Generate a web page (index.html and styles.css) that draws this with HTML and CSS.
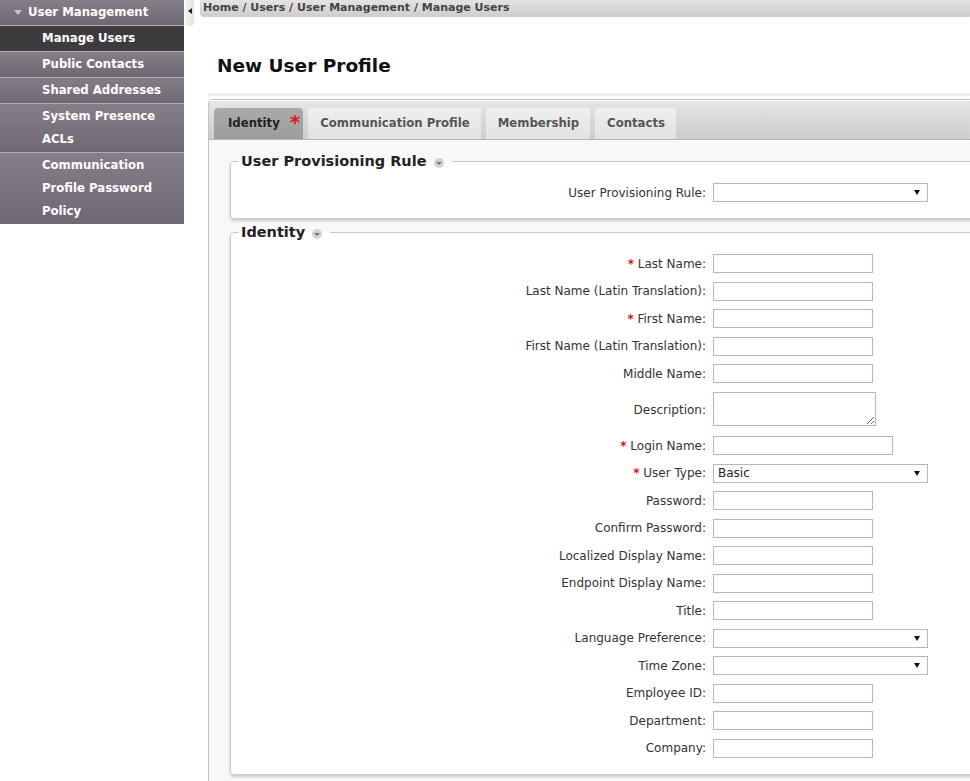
FILE: index.html
```html
<!DOCTYPE html>
<html lang="en">
<head>
<meta charset="utf-8">
<title>New User Profile</title>
<link rel="stylesheet" href="styles.css">
</head>
<body>
<div class="page">
  <nav class="sidebar">
    <div class="nav-head"><span class="caret-down"></span>User Management</div>
    <div class="nav-item active">Manage Users</div>
    <div class="nav-item">Public Contacts</div>
    <div class="nav-item">Shared Addresses</div>
    <div class="nav-item">System Presence<br>ACLs</div>
    <div class="nav-item">Communication<br>Profile Password<br>Policy</div>
  </nav>
  <div class="handle-col"><div class="handle"><span class="caret-left"></span></div></div>
  <main class="main">
    <div class="breadcrumb">Home / Users / User Management / Manage Users</div>
    <h1 class="title">New User Profile</h1>
    <div class="rule"></div>
    <div class="panel">
      <div class="tabbar">
        <div class="tab active">Identity<span class="tab-star">*</span></div>
        <div class="tab">Communication Profile</div>
        <div class="tab">Membership</div>
        <div class="tab">Contacts</div>
      </div>
      <div class="panel-body">
        <fieldset class="box box-rule">
          <legend>User Provisioning Rule<span class="sec-icon"><span></span></span></legend>
          <div class="form">
            <label class="lbl">User Provisioning Rule:</label>
            <div class="select"><span></span><span class="arrow"></span></div>
          </div>
        </fieldset>
        <fieldset class="box box-identity">
          <legend>Identity<span class="sec-icon"><span></span></span></legend>
          <div class="form">
            <label class="lbl"><span class="req">*</span> Last Name:</label>
            <input class="txt" type="text">
            <label class="lbl">Last Name (Latin Translation):</label>
            <input class="txt" type="text">
            <label class="lbl"><span class="req">*</span> First Name:</label>
            <input class="txt" type="text">
            <label class="lbl">First Name (Latin Translation):</label>
            <input class="txt" type="text">
            <label class="lbl">Middle Name:</label>
            <input class="txt" type="text">
            <label class="lbl">Description:</label>
            <textarea class="area"></textarea>
            <label class="lbl"><span class="req">*</span> Login Name:</label>
            <input class="txt wide" type="text">
            <label class="lbl"><span class="req">*</span> User Type:</label>
            <div class="select"><span>Basic</span><span class="arrow"></span></div>
            <label class="lbl">Password:</label>
            <input class="txt" type="text">
            <label class="lbl">Confirm Password:</label>
            <input class="txt" type="text">
            <label class="lbl">Localized Display Name:</label>
            <input class="txt" type="text">
            <label class="lbl">Endpoint Display Name:</label>
            <input class="txt" type="text">
            <label class="lbl">Title:</label>
            <input class="txt" type="text">
            <label class="lbl">Language Preference:</label>
            <div class="select"><span></span><span class="arrow"></span></div>
            <label class="lbl">Time Zone:</label>
            <div class="select"><span></span><span class="arrow"></span></div>
            <label class="lbl">Employee ID:</label>
            <input class="txt" type="text">
            <label class="lbl">Department:</label>
            <input class="txt" type="text">
            <label class="lbl">Company:</label>
            <input class="txt" type="text">
          </div>
        </fieldset>
      </div>
    </div>
  </main>
</div>
</body>
</html>
```
FILE: styles.css
```css
html, body {
  margin: 0;
  padding: 0;
  background: #fff;
  overflow: hidden;
}
body {
  font-family: "DejaVu Sans", Verdana, sans-serif;
  font-size: 12px;
  color: #333;
}
.page {
  display: flex;
  align-items: flex-start;
  width: 970px;
  height: 781px;
}

/* sidebar */
.sidebar {
  width: 184px;
  flex-shrink: 0;
  display: flex;
  flex-direction: column;
  background: #b2acb4;
  gap: 1px;
}
.nav-head, .nav-item {
  font-weight: bold;
  font-size: 11.7px;
  color: #fff;
  background: linear-gradient(#857d88, #6f6873);
  line-height: 23px;
}
.nav-head {
  height: 25px;
  line-height: 25px;
  padding-left: 28px;
  position: relative;
  display: flex;
  align-items: center;
}
.caret-down {
  position: absolute;
  left: 14px;
  top: 10px;
  width: 0;
  height: 0;
  border-left: 4px solid transparent;
  border-right: 4px solid transparent;
  border-top: 5px solid #c9c5cb;
}
.nav-item {
  padding: 1px 0 1px 42px;
}
.nav-item.active {
  background: #3e3b3f;
}

.handle-col {
  width: 16px;
  flex-shrink: 0;
}
.handle {
  margin-left: 1px;
  width: 9px;
  height: 26px;
  background: linear-gradient(90deg, #f2f2f2, #e2e2e2);
  border-radius: 0 0 4px 0;
  display: flex;
  align-items: flex-start;
  justify-content: center;
  padding-top: 8px;
  box-sizing: border-box;
}
.caret-left {
  width: 0;
  height: 0;
  border-top: 3px solid transparent;
  border-bottom: 3px solid transparent;
  border-right: 4px solid #222;
}

/* main */
.main {
  flex: 1;
  min-width: 0;
  overflow: hidden;
}
.breadcrumb {
  height: 17px;
  line-height: 16px;
  padding-left: 3px;
  font-weight: bold;
  font-size: 11px;
  color: #444;
  background: linear-gradient(#e3e3e3, #cdcdcd);
  border-radius: 0 0 0 4px;
  white-space: nowrap;
}
.title {
  margin: 37px 0 0 17px;
  font-size: 18.5px;
  line-height: 24px;
  font-weight: bold;
  color: #111;
}
.rule {
  margin: 15px 0 0 8px;
  height: 3px;
  background: #eeeeee;
}
.panel {
  margin: 3px 0 0 8px;
  width: 790px;
  height: 700px;
  border: 1px solid #c4c4c4;
  border-radius: 4px 0 0 0;
  background: #f8f8f8;
  box-sizing: border-box;
}
.tabbar {
  display: flex;
  gap: 5px;
  align-items: flex-end;
  height: 38px;
  padding: 0 0 0 5px;
  background: linear-gradient(#e5e5e5, #cdcdcd);
  border-top: 1px solid #fff;
  border-bottom: 1px solid #b3b3b3;
  border-radius: 3px 0 0 0;
}
.tab {
  height: 31px;
  line-height: 31px;
  padding: 0 11px 0 12px;
  font-weight: bold;
  font-size: 11.7px;
  color: #555;
  background: linear-gradient(#efefef, #e2e2e2);
  border-radius: 3px 3px 0 0;
  white-space: nowrap;
  position: relative;
}
.tab.active {
  padding: 0 3px 0 14px;
  background: linear-gradient(#aaaaaa, #9c9c9c);
  color: #222;
  border-radius: 4px 4px 0 0;
}
.tab-star {
  display: inline-block;
  color: #e0161c;
  font-size: 20px;
  line-height: 10px;
  vertical-align: top;
  margin: 9px 0 0 10px;
}

.panel-body {
  padding: 12px 0 0 21px;
}
.box {
  width: 760px;
  margin: 0;
  padding: 0 0 16px 0;
  border: 1px solid #cacaca;
  border-radius: 4px;
  background: #fff;
  box-shadow: 0 2px 3px rgba(0, 0, 0, 0.18);
  box-sizing: border-box;
}
.box-identity {
  margin-top: 4px;
  padding-bottom: 16px;
}
.box legend {
  margin-left: 8px;
  padding: 0 2px;
  font-weight: bold;
  font-size: 14.5px;
  line-height: 18px;
  color: #222;
}
.sec-icon {
  display: inline-flex;
  align-items: center;
  justify-content: center;
  width: 10px;
  height: 10px;
  border-radius: 50%;
  background: #d4d4d4;
  margin: 0 6px 0 7px;
  vertical-align: 1px;
}
.sec-icon span {
  width: 0;
  height: 0;
  border-left: 3px solid transparent;
  border-right: 3px solid transparent;
  border-top: 3px solid #777;
  margin-top: 1px;
}

.form {
  display: grid;
  grid-template-columns: 475px auto;
  column-gap: 7px;
  row-gap: 8.5px;
  align-items: center;
  justify-items: start;
  padding-top: 13px;
}
.box-identity .form {
  padding-top: 13px;
}
.lbl {
  justify-self: end;
  white-space: nowrap;
  color: #333;
  font-size: 12px;
}
.req {
  color: #d11;
  font-weight: bold;
}
.txt {
  width: 160px;
  height: 19px;
  box-sizing: border-box;
  border: 1px solid #aabcc6;
  margin: 0;
  padding: 0 4px;
  font: inherit;
  background: #fff;
}
.txt.wide {
  width: 180px;
}
.area {
  width: 163px;
  height: 34px;
  box-sizing: border-box;
  border: 1px solid #aabcc6;
  margin: 0 0 2px 0;
  padding: 2px;
  font: inherit;
  display: block;
}
.select {
  width: 215px;
  height: 19px;
  box-sizing: border-box;
  border: 1px solid #aabcc6;
  background: #fff;
  display: flex;
  align-items: center;
  justify-content: space-between;
  padding: 0 7px 0 4px;
  font-size: 12px;
  color: #222;
}
.arrow {
  width: 0;
  height: 0;
  border-left: 3px solid transparent;
  border-right: 3px solid transparent;
  border-top: 5px solid #111;
}
```
